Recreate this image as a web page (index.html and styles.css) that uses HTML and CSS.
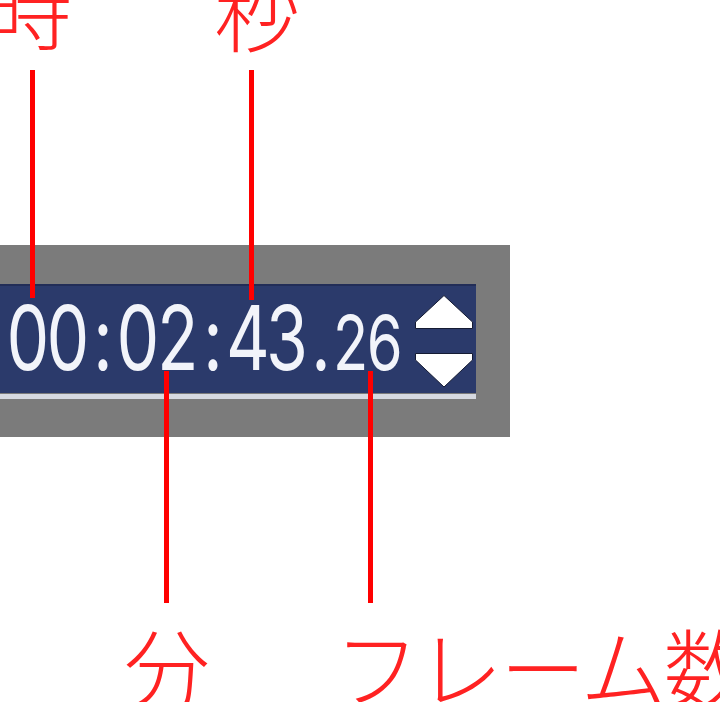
FILE: index.html
```html
<!DOCTYPE html>
<html lang="ja">
<head>
<meta charset="utf-8">
<title>タイムコード表示</title>
<link rel="stylesheet" href="styles.css">
</head>
<body>
<div class="figure">
  <span class="label label-hour">時</span>
  <span class="label label-sec">秒</span>
  <span class="leader leader-hour"></span>
  <span class="leader leader-sec"></span>

  <div class="panel">
    <div class="display">
      <div class="readout">
        <span class="d"><span class="g">0</span></span>
        <span class="d"><span class="g">0</span></span>
        <span class="c"><span class="g">:</span></span>
        <span class="d"><span class="g">0</span></span>
        <span class="d"><span class="g">2</span></span>
        <span class="c"><span class="g">:</span></span>
        <span class="d"><span class="g">4</span></span>
        <span class="d"><span class="g">3</span></span>
        <span class="p"><span class="g">.</span></span>
        <span class="d small"><span class="g">2</span></span>
        <span class="d small"><span class="g">6</span></span>
      </div>
      <svg class="spin" width="58" height="93" viewBox="0 0 58 93">
        <polygon points="29,0.5 57.5,27 57.5,33.5 0.5,33.5 0.5,27" />
        <polygon points="0.5,58.5 57.5,58.5 57.5,65 29,92 0.5,65" />
      </svg>
    </div>
    <div class="rule"></div>
  </div>

  <span class="leader leader-min"></span>
  <span class="leader leader-frame"></span>
  <span class="label label-min">分</span>
  <span class="label label-frame">フレーム数</span>
</div>
</body>
</html>
```
FILE: styles.css
```css
html, body {
  margin: 0;
  padding: 0;
  background: #ffffff;
  overflow: hidden;
}

.figure {
  position: relative;
  width: 720px;
  height: 702px;
  padding-top: 245px;
  box-sizing: border-box;
  overflow: hidden;
}

/* callout captions */
.label {
  position: absolute;
  font-family: "Noto Sans CJK JP", sans-serif;
  font-weight: 300;
  font-size: 86px;
  line-height: 1;
  color: #ff2222;
  white-space: nowrap;
}
.label-hour { left: -14px; top: -36px; }
.label-sec { left: 214px; top: -34px; }
.label-min { left: 124px; top: 622px; }
.label-frame { left: 334px; top: 622px; letter-spacing: -3px; }

/* red leader lines */
.leader {
  position: absolute;
  width: 5px;
  background: #ff0000;
  z-index: 2;
}
.leader-hour { left: 30px; top: 70px; height: 228px; }
.leader-sec { left: 249px; top: 70px; height: 230px; }
.leader-min { left: 164px; top: 371px; height: 232px; }
.leader-frame { left: 368px; top: 371px; height: 232px; }

/* grey bezel around the counter */
.panel {
  width: 510px;
  height: 192px;
  padding-top: 39px;
  box-sizing: border-box;
  background: #7b7b7b;
}

.display {
  display: flex;
  width: 476px;
  height: 109px;
  background: #2b3a6b;
  box-shadow: inset 0 2px 0 #222d57;
}

.rule {
  width: 476px;
  height: 5px;
  margin-top: 1px;
  background: #d6d9e1;
}

.readout {
  display: flex;
  align-items: baseline;
  align-self: flex-start;
  margin-top: 9px;
  padding-left: 8px;
  font-family: Inter, "Liberation Sans", sans-serif;
  font-weight: 400;
  font-size: 89px;
  line-height: 1;
  color: #f2f4fa;
  font-variant-numeric: tabular-nums;
}

.d, .c, .p {
  display: inline-flex;
  justify-content: center;
}
.d { width: 40px; }
.c { width: 30px; }
.p { width: 26px; }
.d.small { width: 34px; font-size: 76px; }

.g {
  display: inline-block;
  transform: scaleX(0.76);
}

.spin {
  align-self: flex-start;
  margin: 11px 3px 0 auto;
}
.spin polygon {
  fill: #ffffff;
  stroke: #151b33;
  stroke-width: 1;
}
```
